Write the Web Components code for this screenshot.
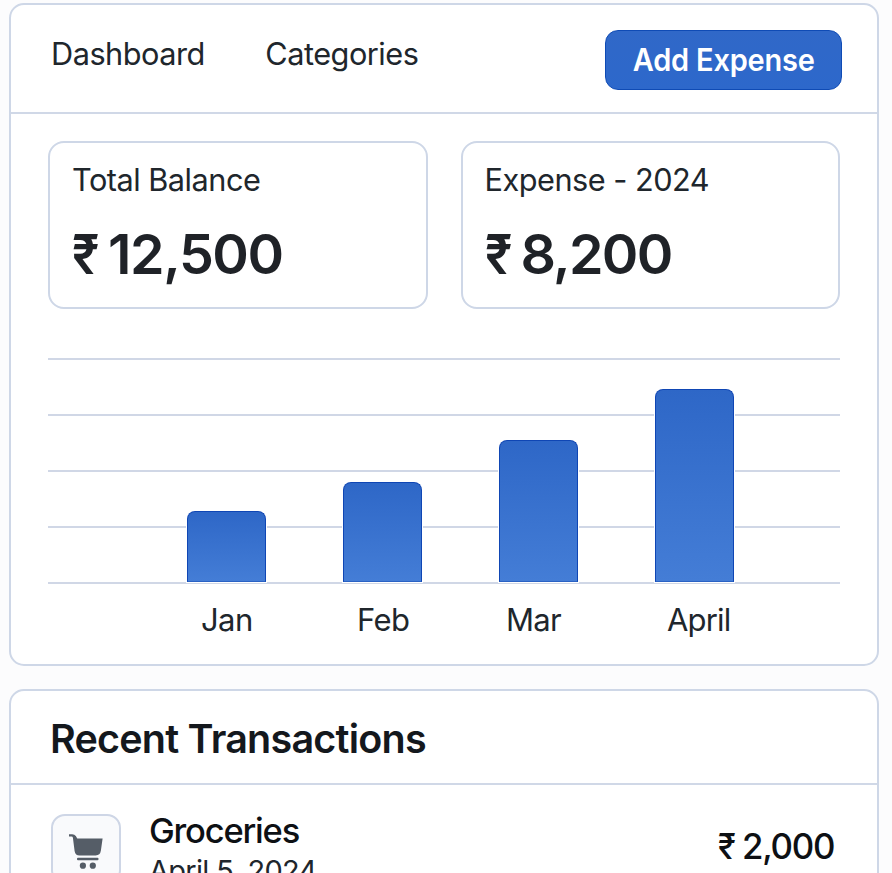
<!DOCTYPE html>
<html lang="en">
<head>
<meta charset="utf-8">
<title>Expense Dashboard</title>
<style>
html,body{margin:0;height:873px;overflow:hidden;background:#fcfcfd}
body{font-family:Inter,"Liberation Sans",sans-serif;color:#20262c}
</style>
</head>
<body>
<expense-app></expense-app>
<script>
const define = (name, html, setup) => customElements.define(name, class extends HTMLElement {
  connectedCallback() {
    if (this.shadowRoot) return;
    const t = document.createElement('template');
    t.innerHTML = html;
    this.attachShadow({ mode: 'open' }).append(t.content.cloneNode(true));
    if (setup) setup(this, this.shadowRoot);
  }
});

define('panel-card', `
<style>
:host{display:block;box-sizing:border-box;background:#fff;border:2px solid #ced7e7;border-radius:15px}
header{box-sizing:border-box;display:flex;border-bottom:2px solid #d0d8e7;height:var(--head)}
</style>
<header><slot name="head"></slot></header><slot></slot>`);

define('nav-link', `
<style>:host{display:block;font-size:30.7px;line-height:40px;letter-spacing:-.5px;white-space:nowrap}</style>
<slot></slot>`);

define('primary-button', `
<style>
:host{display:block}
button{box-sizing:border-box;width:237px;height:60px;padding:0;display:flex;justify-content:center;border:1.5px solid #0f4bb5;border-radius:13px;background:linear-gradient(#3068c8,#2d68cb);color:#fff;font:600 30.8px/58px Inter,"Liberation Sans",sans-serif;white-space:nowrap}
span{display:block;letter-spacing:-.2px;transform:scaleX(.94)}
</style>
<button><span><slot></slot></span></button>`);

define('money-amount', `
<style>
:host{display:flex;white-space:nowrap}
.r{width:var(--rw);transform:scaleX(var(--rx));transform-origin:0 50%}
</style>
<span class="r">₹</span><slot></slot>`);

define('stat-card', `
<style>
:host{display:block;box-sizing:border-box;flex:1;height:168px;border:2px solid #ced7e7;border-radius:16px;padding:17px 22px 0;background:#fff}
.label{font-size:30.7px;line-height:40px;letter-spacing:-.5px;white-space:nowrap}
money-amount{margin-top:34px;font-size:55.5px;font-weight:600;line-height:40px;letter-spacing:var(--ls,-1.75px);--rw:36px;--rx:.88;color:#1f2227}
</style>
<div class="label"><slot></slot></div><money-amount></money-amount>`,
(h, s) => { s.querySelector('money-amount').textContent = h.getAttribute('amount'); });

define('chart-bar', `
<style>
:host{display:block;box-sizing:border-box;width:79px;border:1.5px solid #0f46b4;border-bottom-color:#2a62c4;border-radius:8px 8px 0 0;background:linear-gradient(#2e67c7,#447dd6);box-shadow:0 0 0 1px #fff}
</style>`,
(h) => { h.style.height = h.getAttribute('height') + 'px'; });

define('bar-chart', `
<style>
:host{display:block}
.plot{display:grid;height:226px}
.plot>*{grid-area:1/1}
.lines{display:flex;flex-direction:column;justify-content:space-between}
.lines i{display:block;height:2px;background:#d0d7e6}
.bars{display:flex;align-items:flex-end;gap:77px;padding:0 0 2px 139px}
.labels{display:flex;margin-top:16px;font-size:31px;line-height:40px;white-space:nowrap}
.labels span{box-sizing:border-box;width:156px}
</style>
<div class="plot">
<div class="lines"><i></i><i></i><i></i><i></i><i></i></div>
<div class="bars"><chart-bar height="71"></chart-bar><chart-bar height="100"></chart-bar><chart-bar height="142"></chart-bar><chart-bar height="193"></chart-bar></div>
</div>
<div class="labels" style="padding-left:153px"><span style="letter-spacing:-.6px">Jan</span><span style="letter-spacing:-.6px">Feb</span><span style="letter-spacing:-.7px;margin-left:-7px">Mar</span><span style="letter-spacing:-.8px;margin-left:5px">April</span></div>`);

define('cart-tile', `
<style>
:host{display:block;box-sizing:border-box;width:70px;height:70px;border:2px solid #ced6e6;border-radius:14px;background:#f9fafc}
svg{display:block}
</style>
<svg width="66" height="66" viewBox="53 816 66 66" fill="#555d67">
<path d="M69 834.2h3.2q2.4 0 3.6 1.8l1.5 2.6h25.3l-1.7 12q-.7 4.9-5.2 4.9H79.5q-4.2 0-4.9-4.5l-1.7-13.2q-.2-1.3-1.3-1.3H69z"/>
<rect x="77" y="857.8" width="21.5" height="2.5" rx="1"/>
<circle cx="82.9" cy="865.7" r="3.1"/><circle cx="92.8" cy="865.7" r="3.1"/></svg>`);

define('transaction-row', `
<style>
:host{display:flex;padding:29px 37px 0 40px}
.info{margin-left:28px;flex:1;white-space:nowrap}
.name{font-size:34.5px;line-height:40px;letter-spacing:-1.2px;font-weight:450;margin-top:-3px;color:#0d1014}
.date{font-size:29px;line-height:40px;letter-spacing:-.7px;margin-top:0}
money-amount{font-size:34.8px;font-weight:500;line-height:40px;letter-spacing:-1.25px;margin-top:12px;width:122px;--rw:24px;--rx:.93;color:#0d1014}
</style>
<cart-tile></cart-tile>
<div class="info"><div class="name"><slot></slot></div><div class="date"></div></div>
<money-amount></money-amount>`,
(h, s) => {
  s.querySelector('.date').textContent = h.getAttribute('date');
  s.querySelector('money-amount').textContent = h.getAttribute('amount');
});

define('expense-app', `
<style>
:host{display:flex;flex-direction:column;gap:23px;box-sizing:border-box;width:892px;height:873px;overflow:hidden;padding:3px 13px 0 9px}
.overview{--head:109px;height:663px;flex:none}
.recent{--head:94px;height:230px;flex:none}
nav{display:flex;padding:29px 0 0 40px;gap:60.5px;flex:1}
primary-button{margin:25px 35px 0 0}
.stats{display:flex;gap:33px;padding:27px 37px 0}
bar-chart{margin:49px 37px 0}
h2{margin:0;padding:28px 0 0 39px;font-size:39.5px;font-weight:600;line-height:40px;letter-spacing:-.78px;white-space:nowrap;color:#14181d}
</style>
<panel-card class="overview">
<nav slot="head"><nav-link>Dashboard</nav-link><nav-link>Categories</nav-link></nav>
<primary-button slot="head">Add Expense</primary-button>
<div class="stats"><stat-card amount="12,500" style="--ls:-1.45px">Total Balance</stat-card><stat-card amount="8,200">Expense - 2024</stat-card></div>
<bar-chart></bar-chart>
</panel-card>
<panel-card class="recent">
<h2 slot="head">Recent Transactions</h2>
<transaction-row date="April 5, 2024" amount="2,000">Groceries</transaction-row>
</panel-card>`);
</script>
</body>
</html>
